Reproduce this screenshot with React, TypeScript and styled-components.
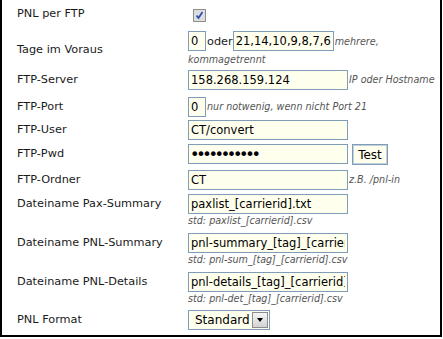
import styled, { createGlobalStyle } from "styled-components";

const GlobalStyle = createGlobalStyle`
  body {
    margin: 0;
    background: #fff;
  }
`;

const Frame = styled.div`
  box-sizing: border-box;
  width: 442px;
  height: 337px;
  border: 2px solid #000;
  border-top: none;
  padding: 2px 0 0 15px;
  font-family: "DejaVu Sans", Verdana, sans-serif;
  font-size: 11.3px;
  color: #1a1a1a;
  background: #fff;
`;

const Row = styled.div<{ $h: number }>`
  box-sizing: border-box;
  display: flex;
  align-items: flex-start;
  height: ${({ $h }) => $h}px;
  padding-top: 2px;
`;

const Label = styled.div<{ $middle?: boolean }>`
  flex: none;
  width: 171px;
  line-height: 20px;
  white-space: nowrap;
  align-self: ${({ $middle }) => ($middle ? "center" : "flex-start")};
`;

const Field = styled.div<{ $lh?: number }>`
  width: 252px;
  line-height: ${({ $lh }) => $lh ?? 20}px;
`;

const TextInput = styled.input<{ $w: number }>`
  box-sizing: border-box;
  width: ${({ $w }) => $w}px;
  height: 20px;
  margin: 0;
  padding: 0 2px;
  border: 1px solid #7f9db9;
  background: #ffffee;
  font: 11.5px "DejaVu Sans", Verdana, sans-serif;
  color: #000;
  vertical-align: middle;
  outline: none;
`;

const Password = styled(TextInput)`
  font-size: 16px;
  letter-spacing: -3.3px;
  padding-left: 1px;
`;

const Between = styled.span`
  margin: 0 0 0 1px;
  vertical-align: middle;
`;

const Hint = styled.span<{ $block?: boolean }>`
  display: ${({ $block }) => ($block ? "block" : "inline")};
  margin-left: ${({ $block }) => ($block ? "0" : "1px")};
  font-size: 9.6px;
  font-style: italic;
  line-height: ${({ $block }) => ($block ? "13px" : "inherit")};
  color: #555;
  vertical-align: middle;
`;

const Button = styled.button`
  box-sizing: border-box;
  width: 36px;
  height: 21px;
  margin: 0 0 0 4px;
  padding: 0;
  border: 1px solid #7f9db9;
  box-shadow: inset 0 0 0 1px #c2cfdc;
  background: #ffffee;
  font: 12px "DejaVu Sans", Verdana, sans-serif;
  color: #000;
  vertical-align: top;
`;

const CheckBox = styled.span`
  display: inline-block;
  margin: 5px 0 0 5px;
  width: 13px;
  height: 13px;
  line-height: 0;
`;

const Select = styled.div`
  box-sizing: border-box;
  display: inline-flex;
  align-items: center;
  width: 82px;
  height: 20px;
  border: 1px solid #7f9db9;
  background: #ffffee;
  font: 12px "DejaVu Sans", Verdana, sans-serif;
  color: #000;
  vertical-align: top;
`;

const SelectText = styled.span`
  flex: 1;
  padding-left: 6px;
`;

const Arrow = styled.span`
  box-sizing: border-box;
  display: flex;
  align-items: center;
  justify-content: center;
  width: 16px;
  height: 16px;
  margin-right: 1px;
  border: 1px solid #8c8c8c;
  background: linear-gradient(#f6f6f6, #d2d2d2);

  &::after {
    content: "";
    border-left: 3.5px solid transparent;
    border-right: 3.5px solid transparent;
    border-top: 4px solid #000;
  }
`;

const Check = () => (
  <CheckBox>
    <svg width="13" height="13" viewBox="0 0 13 13">
      <rect x="0.5" y="0.5" width="12" height="12" fill="#dedede" stroke="#8e8e8e" />
      <path d="M3.5 6.5 L5.5 9 L9.5 3" fill="none" stroke="#2d4fb5" strokeWidth="1.8" />
    </svg>
  </CheckBox>
);

const files = [
  { label: "Dateiname Pax-Summary", value: "paxlist_[carrierid].txt", std: "std: paxlist_[carrierid].csv", h: 39 },
  { label: "Dateiname PNL-Summary", value: "pnl-summary_[tag]_[carrierid].txt", std: "std: pnl-sum_[tag]_[carrierid].csv", h: 39 },
  { label: "Dateiname PNL-Details", value: "pnl-details_[tag]_[carrierid].txt", std: "std: pnl-det_[tag]_[carrierid].csv", h: 38 },
];

export default function App() {
  return (
    <>
      <GlobalStyle />
      <Frame>
        <Row $h={27}>
          <Label>PNL per FTP</Label>
          <Check />
        </Row>
        <Row $h={39}>
          <Label $middle>Tage im Voraus</Label>
          <Field $lh={15}>
            <TextInput $w={18} value="0" readOnly />
            <Between>oder</Between>
            <TextInput $w={101} value="21,14,10,9,8,7,6" readOnly />
            <Hint>mehrere, kommagetrennt</Hint>
          </Field>
        </Row>
        <Row $h={27}>
          <Label>FTP-Server</Label>
          <Field>
            <TextInput $w={160} value="158.268.159.124" readOnly />
            <Hint>IP oder Hostname</Hint>
          </Field>
        </Row>
        <Row $h={23}>
          <Label>FTP-Port</Label>
          <Field>
            <TextInput $w={18} value="0" readOnly />
            <Hint>nur notwenig, wenn nicht Port 21</Hint>
          </Field>
        </Row>
        <Row $h={24}>
          <Label>FTP-User</Label>
          <Field>
            <TextInput $w={160} value="CT/convert" readOnly />
          </Field>
        </Row>
        <Row $h={26}>
          <Label>FTP-Pwd</Label>
          <Field>
            <Password $w={160} type="password" value="abcdefghijk" readOnly />
            <Button>Test</Button>
          </Field>
        </Row>
        <Row $h={24}>
          <Label>FTP-Ordner</Label>
          <Field>
            <TextInput $w={160} value="CT" readOnly />
            <Hint>z.B. /pnl-in</Hint>
          </Field>
        </Row>
        {files.map((f) => (
          <Row key={f.label} $h={f.h}>
            <Label>{f.label}</Label>
            <Field>
              <TextInput $w={160} value={f.value} readOnly />
              <Hint $block>{f.std}</Hint>
            </Field>
          </Row>
        ))}
        <Row $h={25}>
          <Label>PNL Format</Label>
          <Field>
            <Select>
              <SelectText>Standard</SelectText>
              <Arrow />
            </Select>
          </Field>
        </Row>
      </Frame>
    </>
  );
}
